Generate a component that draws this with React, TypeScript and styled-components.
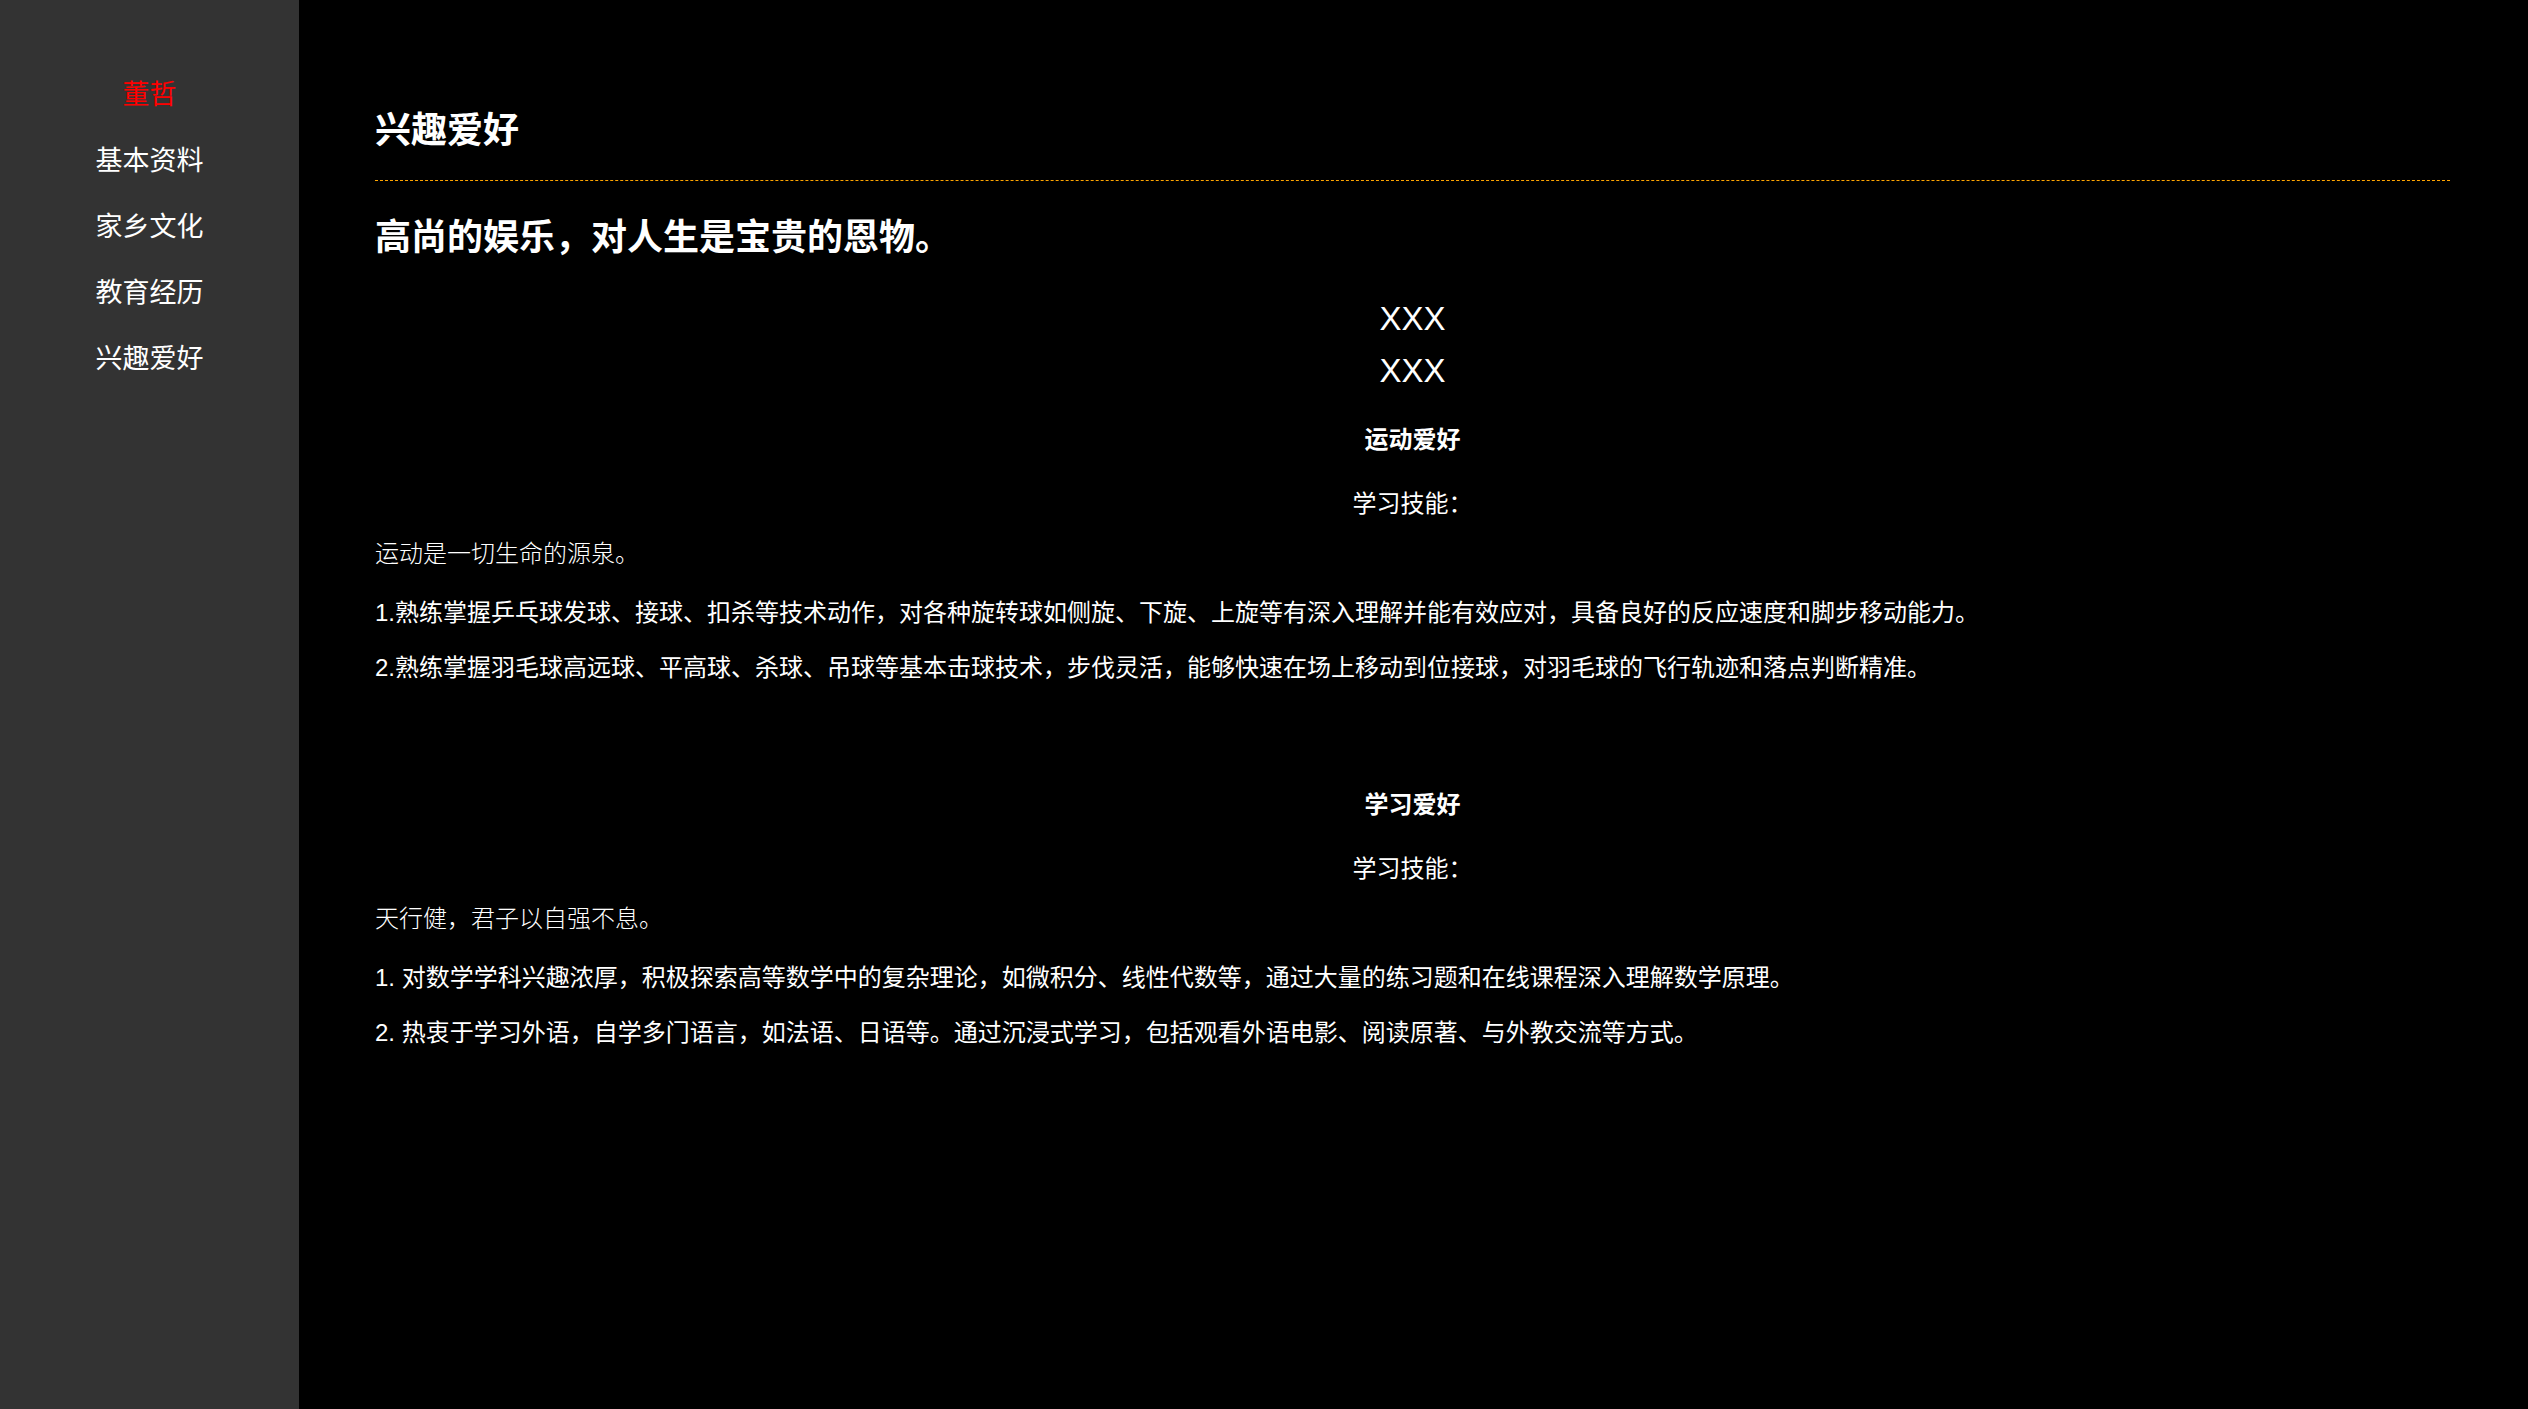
import styled, { createGlobalStyle } from "styled-components"

const GlobalStyle = createGlobalStyle`
    html, body {
        margin: 0;
        padding: 0;
        background: #000;
    }
    body {
        font-family: "Liberation Sans", "Noto Sans CJK SC", sans-serif;
        color: #fff;
    }
`

const Page = styled.div`
    display: flex;
    min-height: 100vh;
`

const Sidebar = styled.nav`
    width: 299px;
    flex-shrink: 0;
    background: #333;
    padding-top: 62px;
    display: flex;
    flex-direction: column;
    align-items: center;
`

const NavItem = styled.a<{ $active?: boolean }>`
    display: block;
    font-size: 27px;
    line-height: 66px;
    color: ${({ $active }) => ($active ? "#f00" : "#fff")};
    text-decoration: none;
`

const Main = styled.main`
    flex: 1;
    padding: 107px 78px 0 76px;
`

const Header = styled.div`
    padding-bottom: 25px;
    border-bottom: 1px dashed #ffa500;
`

const PageTitle = styled.h2`
    margin: 0;
    font-size: 36px;
    line-height: 48px;
    font-weight: bold;
`

const Quote = styled.h2`
    margin: 33px 0 0;
    font-size: 36px;
    line-height: 48px;
    font-weight: bold;
`

const Names = styled.div`
    margin-top: 31px;
    text-align: center;
    font-size: 33px;
    line-height: 52px;
`

const Section = styled.section<{ $offset: number }>`
    margin-top: ${({ $offset }) => $offset}px;
`

const SectionTitle = styled.h4`
    margin: 0;
    text-align: center;
    font-size: 24px;
    line-height: 32px;
    font-weight: bold;
`

const SkillLabel = styled.p`
    margin: 32px 0 0;
    text-align: center;
    font-size: 24px;
    line-height: 32px;
`

const Motto = styled.p`
    margin: 18px 0 0;
    font-family: "Liberation Serif", "Noto Sans CJK SC", serif;
    font-size: 24px;
    font-weight: 300;
    line-height: 32px;
    color: #fff;
`

const Item = styled.p`
    margin: 27px 0 0;
    font-size: 24px;
    line-height: 32px;

    & + & {
        margin-top: 23px;
    }
`

type Hobby = {
    title: string
    motto: string
    items: string[]
    offset: number
}

const hobbies: Hobby[] = [
    {
        title: "运动爱好",
        motto: "运动是一切生命的源泉。",
        offset: 27,
        items: [
            "1.熟练掌握乒乓球发球、接球、扣杀等技术动作，对各种旋转球如侧旋、下旋、上旋等有深入理解并能有效应对，具备良好的反应速度和脚步移动能力。",
            "2.熟练掌握羽毛球高远球、平高球、杀球、吊球等基本击球技术，步伐灵活，能够快速在场上移动到位接球，对羽毛球的飞行轨迹和落点判断精准。",
        ],
    },
    {
        title: "学习爱好",
        motto: "天行健，君子以自强不息。",
        offset: 105,
        items: [
            "1. 对数学学科兴趣浓厚，积极探索高等数学中的复杂理论，如微积分、线性代数等，通过大量的练习题和在线课程深入理解数学原理。",
            "2. 热衷于学习外语，自学多门语言，如法语、日语等。通过沉浸式学习，包括观看外语电影、阅读原著、与外教交流等方式。",
        ],
    },
]

const navLinks = ["基本资料", "家乡文化", "教育经历", "兴趣爱好"]

function App(): JSX.Element {
    return (
        <Page>
            <GlobalStyle />
            <Sidebar>
                <NavItem $active>董哲</NavItem>
                {navLinks.map((link) => (
                    <NavItem key={link}>{link}</NavItem>
                ))}
            </Sidebar>
            <Main>
                <Header>
                    <PageTitle>兴趣爱好</PageTitle>
                </Header>
                <Quote>高尚的娱乐，对人生是宝贵的恩物。</Quote>
                <Names>
                    <div>XXX</div>
                    <div>XXX</div>
                </Names>
                {hobbies.map((hobby) => (
                    <Section key={hobby.title} $offset={hobby.offset}>
                        <SectionTitle>{hobby.title}</SectionTitle>
                        <SkillLabel>学习技能：</SkillLabel>
                        <Motto>{hobby.motto}</Motto>
                        {hobby.items.map((item) => (
                            <Item key={item}>{item}</Item>
                        ))}
                    </Section>
                ))}
            </Main>
        </Page>
    )
}

export default App
